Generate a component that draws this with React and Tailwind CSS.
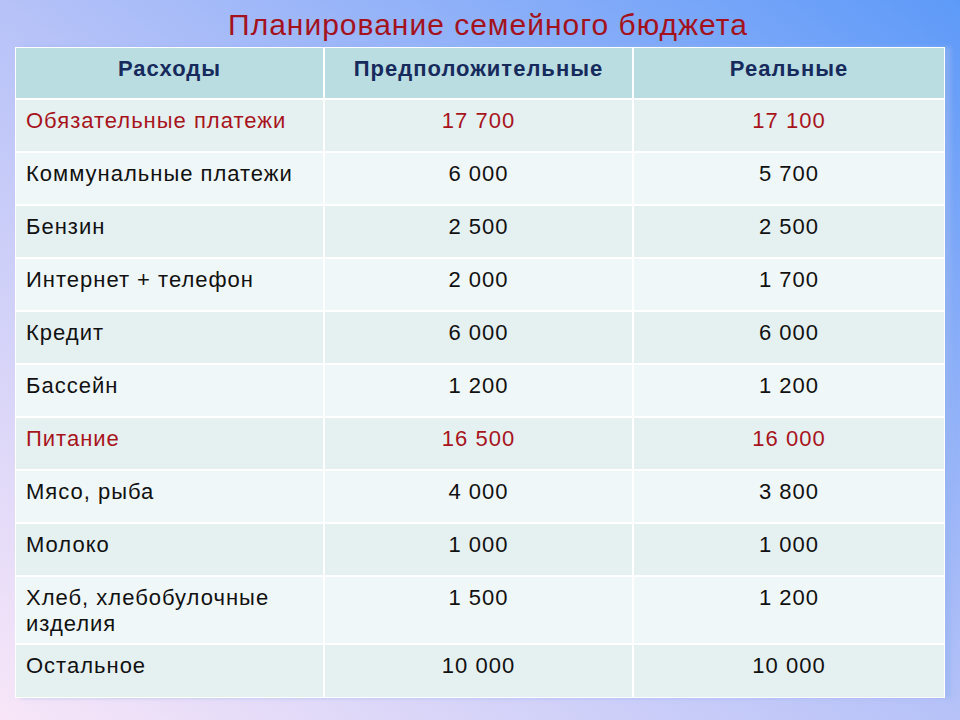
const rows = [
  { name: "Обязательные платежи", plan: "17 700", real: "17 100", red: true },
  { name: "Коммунальные платежи", plan: "6 000", real: "5 700" },
  { name: "Бензин", plan: "2 500", real: "2 500" },
  { name: "Интернет + телефон", plan: "2 000", real: "1 700" },
  { name: "Кредит", plan: "6 000", real: "6 000" },
  { name: "Бассейн", plan: "1 200", real: "1 200" },
  { name: "Питание", plan: "16 500", real: "16 000", red: true },
  { name: "Мясо, рыба", plan: "4 000", real: "3 800" },
  { name: "Молоко", plan: "1 000", real: "1 000" },
  { name: "Хлеб, хлебобулочные изделия", plan: "1 500", real: "1 200", tall: true },
  { name: "Остальное", plan: "10 000", real: "10 000" },
];

export default function App() {
  return (
    <div
      className="w-[960px] h-[720px] overflow-hidden bg-gradient-to-tr from-[#f8e6f8] via-[#b6c2f8] to-[#5d9af8]"
      style={{ fontFamily: '"Liberation Sans", Arial, sans-serif' }}
    >
      {/* Title */}
      <h1 className="h-[47px] pt-[8px] pl-[16px] text-center text-[30px] leading-[34px] tracking-[1px] text-[#a3121d]">
        Планирование семейного бюджета
      </h1>

      {/* Table */}
      <div className="ml-[15px] w-[930px] border border-white bg-white shadow-[6px_0_4px_rgba(150,180,240,0.6)]">
        <div className="grid h-[52px] grid-cols-[309px_309px_1fr] border-b-2 border-white bg-[#b9dde1] text-[22px] font-bold leading-[26px] tracking-[1px] text-[#172a5c]">
          <div className="border-r-2 border-white pt-[8px] text-center">Расходы</div>
          <div className="border-r-2 border-white pt-[8px] text-center">Предположительные</div>
          <div className="pt-[8px] text-center">Реальные</div>
        </div>
        {rows.map((r, i) => (
          <div
            key={r.name}
            className={`grid grid-cols-[309px_309px_1fr] text-[22px] leading-[26px] tracking-[1px] ${
              i === rows.length - 1 ? "h-[52px]" : "border-b-2 border-white"
            } ${r.tall ? "h-[68px]" : i === rows.length - 1 ? "" : "h-[53px]"} ${
              i % 2 === 0 ? "bg-[#e5f0f1]" : "bg-[#f0f7f8]"
            } ${r.red ? "text-[#a8141c]" : "text-[#111111]"}`}
          >
            <div className="border-r-2 border-white pl-[10px] pr-[8px] pt-[8px]">{r.name}</div>
            <div className="border-r-2 border-white pt-[8px] text-center">{r.plan}</div>
            <div className="pt-[8px] text-center">{r.real}</div>
          </div>
        ))}
      </div>
    </div>
  );
}
